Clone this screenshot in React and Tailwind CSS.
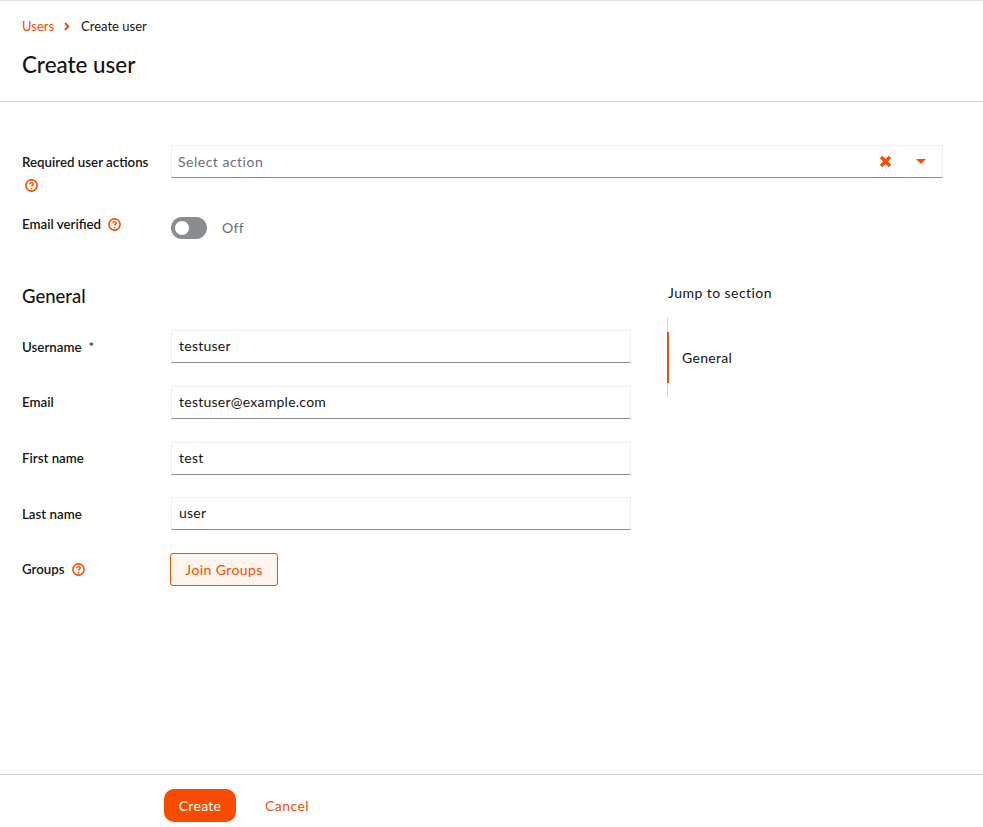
import React from 'react'

const HelpIcon = () => (
    <svg width="13" height="13" viewBox="0 0 13 13" fill="none" className="shrink-0">
        <circle cx="6.5" cy="6.5" r="5.6" stroke="#f84c00" strokeWidth="1.6" />
        <path d="M4.8 5.2c0-1 .8-1.6 1.7-1.6s1.7.6 1.7 1.5c0 1.2-1.7 1.3-1.7 2.5" stroke="#f84c00" strokeWidth="1.4" fill="none" />
        <circle cx="6.5" cy="9.5" r=".85" fill="#f84c00" />
    </svg>
)

const Field = ({ label, required, value }) => (
    <div className="flex items-center h-[33px]">
        <label className="w-[149px] pt-[2px] text-[13.3px] font-semibold text-[#151515]">
            {label}
            {required && <span className="ml-[7px] font-normal">*</span>}
        </label>
        <input
            readOnly
            value={value}
            className="w-[460px] h-[33px] px-[7px] pb-[2px] text-sm text-[#151515] tracking-[0.25px] border border-[#f0f0f0] border-b-[#8a8d90] outline-none"
        />
    </div>
)

export default function App() {
    return (
        <div className="h-[827px] flex flex-col bg-white text-[#151515] font-['Lato','Noto_Sans',sans-serif] overflow-hidden">
            <header className="h-[102px] shrink-0 border-t border-b border-t-[#e4e4e4] border-b-[#d2d2d2] px-[22px] pt-[17px]">
                <nav className="flex items-center h-[17px] text-[13px]">
                    <span className="text-[#f84c00]">Users</span>
                    <svg width="6" height="9" viewBox="0 0 6 9" className="ml-[10px] mr-[11px]">
                        <path d="M1 1l3.2 3.5L1 8" stroke="#f84c00" strokeWidth="2" fill="none" />
                    </svg>
                    <span>Create user</span>
                </nav>
                <h1 className="mt-[10px] text-[22.4px] leading-[40px] font-medium">Create user</h1>
            </header>

            <main className="flex-1 pl-[22px] pr-10 pt-[43px]">
                <div className="flex items-start">
                    <div className="w-[149px] text-[13.3px] font-semibold leading-[35px]">
                        Required user actions
                        <div className="-mt-px leading-none pl-[3px]"><HelpIcon /></div>
                    </div>
                    <div className="flex items-center w-[772px] h-[33px] pl-[6px] pr-4 border border-[#f0f0f0] border-b-[#8a8d90]">
                        <span className="flex-1 text-sm text-[#6a6e73] tracking-[0.5px]">Select action</span>
                        <svg width="13" height="13" viewBox="0 0 13 13">
                            <path d="M2 2l9 9M11 2l-9 9" stroke="#f84c00" strokeWidth="3.2" />
                        </svg>
                        <svg width="10" height="5" viewBox="0 0 10 5" className="ml-[24px]">
                            <path d="M0 0h10L5 5z" fill="#f84c00" />
                        </svg>
                    </div>
                </div>

                <div className="flex items-start mt-[24px]">
                    <div className="flex items-center gap-[7px] w-[149px] h-[17px] text-[13.3px] font-semibold">
                        Email verified <HelpIcon />
                    </div>
                    <div className="flex items-center gap-[15px] h-[22px] mt-px">
                        <span className="flex items-center w-9 h-[22px] px-[4px] rounded-full bg-[#8a8d90]">
                            <span className="w-[14px] h-[14px] rounded-full bg-white" />
                        </span>
                        <span className="text-sm text-[#6a6e73] tracking-[0.3px]">Off</span>
                    </div>
                </div>

                <div className="flex mt-[45px]">
                    <section className="w-[645px] shrink-0">
                        <h2 className="text-[18.5px] leading-[24px] font-medium">General</h2>
                        <div className="flex flex-col gap-[22.8px] mt-[22px]">
                            <Field label="Username" required value="testuser" />
                            <Field label="Email" value="testuser@example.com" />
                            <Field label="First name" value="test" />
                            <Field label="Last name" value="user" />
                            <div className="flex items-center h-[33px]">
                                <div className="flex items-center gap-[7px] w-[148px] text-[13.3px] font-semibold">
                                    Groups <HelpIcon />
                                </div>
                                <button className="w-[108px] h-[33px] rounded-[3px] border border-[#f84c00] bg-[#fff4ec] text-sm tracking-[0.4px] text-[#f84c00]">
                                    Join Groups
                                </button>
                            </div>
                        </div>
                    </section>
                    <aside className="-mt-[1px] pl-px">
                        <div className="text-sm leading-[20px] tracking-[0.45px]">Jump to section</div>
                        <div className="relative -ml-px mt-[15px] h-[79px] w-[150px] border-l border-[#d2d2d2]">
                            <div className="absolute -left-px top-[14px] flex items-center h-[51px] border-l-2 border-[#f84c00] pl-[13px] text-sm tracking-[0.3px]">
                                General
                            </div>
                        </div>
                    </aside>
                </div>
            </main>

            <footer className="h-[53px] shrink-0 flex items-start gap-[29px] border-t border-[#d2d2d2] pl-[164px] pt-[14px]">
                <button className="w-[72px] h-[33px] rounded-[10px] bg-[#f84c00] text-sm tracking-[0.3px] text-white">Create</button>
                <button className="h-[33px] text-sm tracking-[0.45px] text-[#f84c00]">Cancel</button>
            </footer>
        </div>
    )
}
